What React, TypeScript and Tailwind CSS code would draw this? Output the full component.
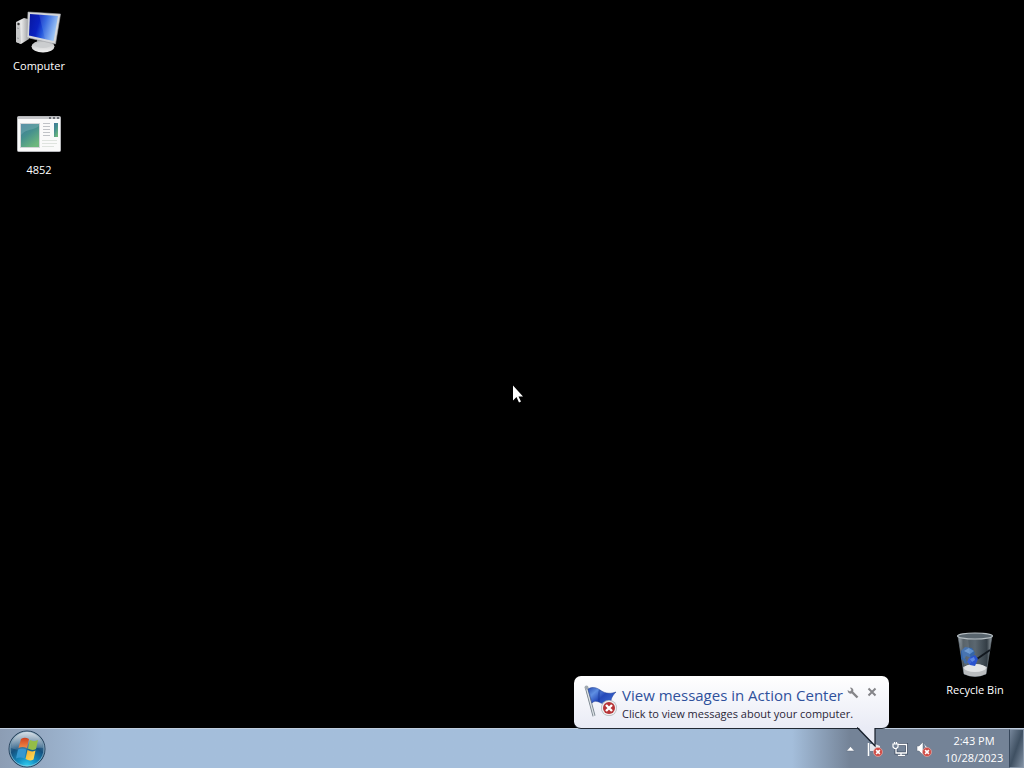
import type { ReactNode } from "react";

function ComputerIcon() {
  return (
    <svg width="48" height="46" viewBox="0 0 48 46" aria-hidden="true">
      <defs>
        <linearGradient id="screen" x1="0" y1="0" x2="1" y2="0.3">
          <stop offset="0" stopColor="#0716a0" />
          <stop offset="0.4" stopColor="#0a22c0" />
          <stop offset="0.6" stopColor="#2457dc" />
          <stop offset="1" stopColor="#9fc6f6" />
        </linearGradient>
        <linearGradient id="tower" x1="0" y1="0" x2="1" y2="0">
          <stop offset="0" stopColor="#c9cacb" />
          <stop offset="0.4" stopColor="#e9e9e9" />
          <stop offset="1" stopColor="#9c9d9f" />
        </linearGradient>
        <linearGradient id="base" x1="0" y1="0" x2="0" y2="1">
          <stop offset="0" stopColor="#b6b8ba" />
          <stop offset="1" stopColor="#f2f2f2" />
        </linearGradient>
      </defs>
      <path d="M1 14 L9 10 L13 11 L14 31 L6 36 L1 34Z" fill="url(#tower)" />
      <path d="M1 14 L5 15 L6 36 L1 34Z" fill="#c6c7c8" />
      <path d="M2 20l2 .5M2 30l2 .5" stroke="#9a9c9f" strokeWidth="1" />
      <circle cx="3.500" cy="16" r="1.200" fill="#333" />
      <path d="M22 31 L36 34 L36 39 L22 38Z" fill="#8f9193" />
      <ellipse cx="28" cy="38.500" rx="11.500" ry="6" fill="url(#base)" />
      <ellipse cx="28" cy="37" rx="8" ry="3" fill="#cbcdcf" />
      <path d="M13 4 L45.500 6 L40.500 36 L12 29.500Z" fill="#d6d8db" stroke="#a2a5aa" strokeWidth=".6" />
      <path d="M15 6 L43 8 L38.500 33 L14 27.500Z" fill="url(#screen)" />
      <path d="M24 6.600 L43 8 L38.500 33 L30 31Z" fill="#8eb7f4" opacity=".2" />
    </svg>
  );
}

function ProgramIcon() {
  return (
    <svg width="44" height="36" viewBox="0 0 44 36" aria-hidden="true">
      <defs>
        <linearGradient id="pane" x1="0" y1="0" x2="0.6" y2="1">
          <stop offset="0" stopColor="#3f779b" />
          <stop offset="0.5" stopColor="#46908e" />
          <stop offset="1" stopColor="#6db77d" />
        </linearGradient>
      </defs>
      <rect x=".5" y=".5" width="43" height="35" rx="1" fill="#fafafa" stroke="#b6b7ba" />
      <path d="M1 1h42v2H1z" fill="#c6c7ca" />
      <path d="M32 2h2M36 2h2M40 2h2" stroke="#4f535b" strokeWidth="1.500" />
      <path d="M3.500 7.500h19v24h-19z" fill="url(#pane)" stroke="#d2d5d7" />
      <path d="M4 19c6-7 12-4 18-9v-2H4z" fill="#8abdc1" opacity=".35" />
      <path d="M26 7.500h7M26 10.500h7M26 13.500h7M26 16.500h7M26 19.500h7" stroke="#c0c3c7" />
      <path d="M25 24.500h15M25 27.500h15M25 30.500h12" stroke="#dfe4df" />
      <path d="M37 7h4v14h-4z" fill="url(#pane)" />
    </svg>
  );
}

function BinIcon() {
  return (
    <svg width="38" height="46" viewBox="0 0 38 46" aria-hidden="true">
      <defs>
        <linearGradient id="glass" x1="0" y1="0" x2="1" y2="0">
          <stop offset="0" stopColor="#a4adb3" />
          <stop offset="0.15" stopColor="#47525a" />
          <stop offset="0.5" stopColor="#5b6770" />
          <stop offset="0.85" stopColor="#333d45" />
          <stop offset="1" stopColor="#9da6ac" />
        </linearGradient>
      </defs>
      <path d="M2 4 L8 42 Q19 47 30 42 L36 4Z" fill="url(#glass)" stroke="#68747c" strokeWidth=".7" />
      <path d="M7 35 Q19 29 31 35 L30 42 Q19 47 8 42Z" fill="#b9bcbe" />
      <ellipse cx="19" cy="36" rx="11" ry="4" fill="#e2e4e5" />
      <path d="M18 29 L34 18" stroke="#12181f" strokeWidth="2" />
      <path d="M5 19l4-4 7 1 3 5-3 5-6-2-2 5-3-2z" fill="#3465a8" />
      <path d="M8 19l5-3 5 3-4 3z" fill="#5f90cc" />
      <path d="M13 26l6-3 3 4-3 7-5-1-3-3z" fill="#2953cf" />
      <path d="M14 27l4-2 1 3-3 2z" fill="#5c86e0" />
      <path d="M7 26l3 1 1 5-3-1z" fill="#2a5c9d" />
      <path d="M4 6h8l3 25-7 3z" fill="#fff" opacity=".1" />
      <ellipse cx="19" cy="4" rx="17.500" ry="3" fill="#59656e" stroke="#b5bdc2" strokeWidth="1.200" />
    </svg>
  );
}

function StartOrb() {
  return (
    <svg width="38" height="38" viewBox="0 0 38 38" aria-hidden="true">
      <defs>
        <radialGradient id="orb" cx=".5" cy="1" r=".9">
          <stop offset="0" stopColor="#37d5f4" />
          <stop offset=".3" stopColor="#1490c4" />
          <stop offset=".65" stopColor="#14517f" />
          <stop offset="1" stopColor="#70859b" />
        </radialGradient>
        <linearGradient id="orbShine" x1="0" y1="0" x2="0" y2="1">
          <stop offset="0" stopColor="#e5edf3" stopOpacity=".85" />
          <stop offset="1" stopColor="#a8c0d0" stopOpacity=".2" />
        </linearGradient>
        <linearGradient id="logoRed" x1="0" y1="0" x2="0" y2="1">
          <stop offset="0" stopColor="#cf4220" />
          <stop offset="1" stopColor="#f08a48" />
        </linearGradient>
        <linearGradient id="logoYellow" x1="0" y1="0" x2="1" y2="1">
          <stop offset="0" stopColor="#f3a82a" />
          <stop offset="1" stopColor="#ffe35f" />
        </linearGradient>
      </defs>
      <circle cx="19" cy="19" r="18" fill="url(#orb)" stroke="#243f59" />
      <circle cx="19" cy="19" r="17" fill="none" stroke="#a6cbdc" strokeOpacity=".65" />
      <path d="M3 18a16 16 0 0 1 32 0c-8-2-21 5-32 0z" fill="url(#orbShine)" />
      <path d="M13 9c3-1.700 5-1.500 8 0l-2 9c-3-1.500-6-1.500-8.500 0z" fill="url(#logoRed)" />
      <path d="M22 10c3 1.500 5 1.500 8 0l-2 9c-3 1.500-5 1-8-.5z" fill="#94bd48" />
      <path d="M10 19.500c3-1.500 5-1.500 8.500 0l-2 9c-3-1.500-5.500-1.500-8.500 0z" fill="#3697cf" />
      <path d="M19.500 20c3 1.500 5 2 8 .5l-2 9c-3 1.500-5 1-8-.5z" fill="url(#logoYellow)" />
    </svg>
  );
}

function ErrorBadge({ x, y, r }: { x: number; y: number; r: number }) {
  const d = r * 0.42;
  return (
    <g>
      <circle cx={x} cy={y} r={r} fill="#cf4a44" stroke="#e7b5b1" strokeWidth={r / 7} />
      <path
        d={`M${x - d} ${y - d}L${x + d} ${y + d}M${x + d} ${y - d}L${x - d} ${y + d}`}
        stroke="#fff"
        strokeWidth={r * 0.34}
      />
    </g>
  );
}

function FlagIcon() {
  return (
    <svg className="shrink-0" width="34" height="34" viewBox="0 -1 34 34" aria-hidden="true">
      <defs>
        <linearGradient id="flag" x1="0" y1="0" x2="1" y2=".7">
          <stop offset="0" stopColor="#274bb0" />
          <stop offset=".3" stopColor="#5f8fe2" />
          <stop offset=".6" stopColor="#2549ba" />
          <stop offset="1" stopColor="#3b67cf" />
        </linearGradient>
      </defs>
      <path d="M2.500 3L10 31" stroke="#77828c" strokeWidth="3" />
      <path d="M2.500 3L10 31" stroke="#dce1e4" strokeWidth="1.300" />
      <circle cx="2.500" cy="2.500" r="2" fill="#a1a9b0" />
      <path d="M4 4c5-3 9-1 12 1s8 5 16 2c-4 4-5 7-5 10-5 3-9 2-12 0-3-1-5-1-7 1z" fill="url(#flag)" stroke="#213f92" strokeWidth=".5" />
      <path d="M16 5c-2 4-1 8-1 12" stroke="#173692" strokeWidth="2" opacity=".45" fill="none" />
      <circle cx="25" cy="23" r="8" fill="#b3b6bb" />
      <circle cx="25" cy="23" r="7.300" fill="#eeeef0" />
      <circle cx="25" cy="23" r="6" fill="#b73336" />
      <path d="M22 20l6 6M28 20l-6 6" stroke="#fff" strokeWidth="2.400" />
    </svg>
  );
}

function DesktopIcon({ label, children, className }: { label: string; children: ReactNode; className: string }) {
  return (
    <button type="button" className={`flex w-[74px] flex-col items-center justify-between text-[11px] leading-4 text-white ${className}`}>
      {children}
      <span className="whitespace-nowrap">{label}</span>
    </button>
  );
}

function Balloon() {
  return (
    <aside className="absolute right-[135px] bottom-[39px] flex h-[53px] w-[315px] items-start rounded-[7px] border-b border-b-[#202833] bg-linear-to-b from-white to-[#e9ebf5] pt-2 pl-[10px]">
      <FlagIcon />
      <div className="ml-1 flex grow flex-col whitespace-nowrap">
        <div className="flex items-start">
          <a href="#action-center" className="text-[15px] leading-[23px] text-[#2f519c]">
            View messages in Action Center
          </a>
          <button type="button" aria-label="Options" className="ml-auto pt-[3px]">
            <svg width="12" height="12" viewBox="0 0 12 12" aria-hidden="true">
              <path d="M5 5l5.500 5.500" stroke="#858589" strokeWidth="2.400" />
              <path d="M4 .5C6 1 7 3 6 5S2.500 7.500 1 5l-.5-2L3 4.500 4.500 3 3 .7z" fill="#858589" />
            </svg>
          </button>
          <button type="button" aria-label="Close" className="mr-3 ml-2 pt-[3px]">
            <svg width="10" height="10" viewBox="0 0 10 10" aria-hidden="true">
              <path d="M1.500 1.500l7 7M8.500 1.500l-7 7" stroke="#858589" strokeWidth="2" />
            </svg>
          </button>
        </div>
        <p className="text-[11px] leading-[13px] text-[#2b2638]">Click to view messages about your computer.</p>
      </div>
      <svg className="absolute right-3 -bottom-[20px]" width="20" height="21" viewBox="0 0 20 21" aria-hidden="true">
        <path d="M1 0L18 18V0z" fill="#e9ebf5" />
        <path d="M0 .5L18 19V1" fill="none" stroke="#161d28" strokeWidth="1.200" />
      </svg>
    </aside>
  );
}

function Taskbar() {
  return (
    <footer className="flex h-10 items-stretch border-t border-t-[#c0cedf] bg-linear-to-r from-[#8c9db4] from-0% via-[#a4bedb] via-10% to-[#a4bedb] to-75% text-white">
      <button type="button" aria-label="Start" className="ml-2">
        <StartOrb />
      </button>
      <div className="ml-auto flex items-center bg-linear-to-r from-transparent to-[#748397] to-25% pl-[54px]">
        <button type="button" aria-label="Show hidden icons">
          <svg width="9" height="6" viewBox="0 0 9 6" aria-hidden="true">
            <path d="M.5 5L4.500 .5 8.500 5z" fill="#fff" stroke="#5c6b7e" strokeWidth=".5" />
          </svg>
        </button>
        <button type="button" aria-label="Action Center" className="ml-3">
          <svg width="17" height="18" viewBox="0 0 17 18" aria-hidden="true">
            <path d="M1.500 3v13" stroke="#fff" strokeWidth="1.500" />
            <path d="M3 4h5l5 2v5H3z" fill="#e4e8ee" />
            <ErrorBadge x={11} y={12} r={4.5} />
          </svg>
        </button>
        <button type="button" aria-label="Network" className="ml-2">
          <svg width="16" height="16" viewBox="0 0 16 16" fill="none" aria-hidden="true">
            <path d="M6 3.500h8.500v8.500H4V8M9 12v2.500M6 14.500h7" stroke="#435166" strokeWidth="3" />
            <path d="M6 3.500h8.500v8.500H4V8M9 12v2.500M6 14.500h7" stroke="#fff" strokeWidth="1.300" />
            <path d="M1 3h5v3L4.500 7.500h-2L1 6zM2.500 1v2M4.500 1v2" stroke="#fff" strokeWidth="1.200" />
          </svg>
        </button>
        <button type="button" aria-label="Volume muted" className="ml-2">
          <svg width="17" height="18" viewBox="0 0 17 18" aria-hidden="true">
            <path d="M1 6h2l4-4v13l-4-4H1z" fill="#fff" stroke="#5c6878" strokeWidth=".5" />
            <path d="M8.500 5c1.500 1 2 3 2 5" stroke="#fff" fill="none" />
            <ErrorBadge x={11} y={12} r={4.5} />
          </svg>
        </button>
        <time dateTime="2023-10-28T14:43" className="ml-[11px] flex w-[60px] flex-col items-center text-[11px] leading-[17px] whitespace-nowrap">
          <span>2:43 PM</span>
          <span>10/28/2023</span>
        </time>
        <button type="button" aria-label="Show desktop" className="ml-[5px] w-[15px] self-stretch border border-[#8998aa] border-l-[#37475b] bg-linear-to-br from-[#76869a] via-[#3f5062] to-[#8291a3]" />
      </div>
    </footer>
  );
}

export default function App() {
  return (
    <div className="relative flex min-h-screen cursor-default flex-col overflow-hidden bg-black font-['Open_Sans','Noto_Sans',sans-serif]">
      <main className="flex grow justify-between">
        <div className="flex flex-col items-start gap-[42px] px-[2px] pt-[8px]">
          <DesktopIcon label="Computer" className="h-[66px]">
            <ComputerIcon />
          </DesktopIcon>
          <DesktopIcon label="4852" className="h-[62px]">
            <ProgramIcon />
          </DesktopIcon>
        </div>
        <div className="flex flex-col justify-end pr-3 pb-[30px]">
          <DesktopIcon label="Recycle Bin" className="h-[66px]">
            <BinIcon />
          </DesktopIcon>
        </div>
      </main>
      <Taskbar />
      <Balloon />
      <svg className="pointer-events-none absolute top-1/2 left-1/2" width="12" height="20" viewBox="0 0 12 20" aria-hidden="true">
        <path d="M1 1.500v15l3.500-3.500 2.500 5.500 2-1-2.500-5h4.500z" fill="#fff" />
      </svg>
    </div>
  );
}
